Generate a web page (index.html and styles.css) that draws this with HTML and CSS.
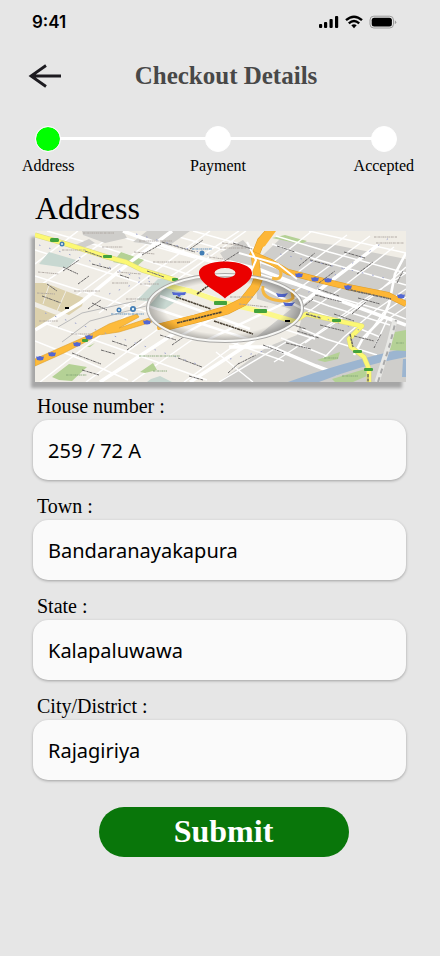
FILE: index.html
```html
<!DOCTYPE html>
<html lang="en">
<head>
<meta charset="utf-8">
<meta name="viewport" content="width=device-width, initial-scale=1">
<title>Checkout Details</title>
<link rel="stylesheet" href="styles.css">
</head>
<body>
<div class="status">
  <span>9:41</span>
  <svg width="80" height="16" viewBox="0 0 80 16" aria-hidden="true">
    <rect x="1" y="10" width="3.200" height="4" rx="1"/>
    <rect x="6" y="8" width="3.200" height="6" rx="1"/>
    <rect x="11.500" y="5" width="3.200" height="9" rx="1"/>
    <rect x="17" y="2" width="3.200" height="12" rx="1"/>
    <g fill="none" stroke="#000" stroke-width="2.400">
      <path d="M28 6.200Q36 -.8 44 6.200"/>
      <path d="M30.800 9.300Q36 4.800 41.200 9.300"/>
    </g>
    <path d="M33.300 11.300Q36 9.200 38.700 11.300L36 14.200Z"/>
    <rect x="52" y="2.200" width="23.500" height="11.800" rx="3.800" fill="none" stroke="#9b9b9b"/>
    <rect x="53.700" y="3.800" width="20.200" height="8.600" rx="2.500"/>
    <path d="M76.800 6.200Q78.300 7 78.300 8.200T76.800 10.200Z" fill="#9b9b9b"/>
  </svg>
</div>
<header class="header">
  <button class="back" type="button" aria-label="Back">
    <svg width="34" height="24" viewBox="0 0 34 24" fill="none" stroke="#1d1b20" stroke-width="2.800"><path d="M33 12H3M18 1.500L3 12L18 22.500"/></svg>
  </button>
  <h1>Checkout Details</h1>
</header>
<main>
  <ol class="steps">
    <li class="step current" aria-current="step">Address</li>
    <li class="step">Payment</li>
    <li class="step">Accepted</li>
  </ol>
  <form class="form">
    <h2>Address</h2>
    <svg class="map" viewBox="0 0 371 151" role="img" aria-label="Map of the delivery address">
      <defs>
        <radialGradient id="rim"><stop offset=".78" stop-color="#000" stop-opacity="0"/><stop offset="1" stop-color="#000" stop-opacity=".28"/></radialGradient>
        <clipPath id="glass"><ellipse cx="190" cy="77" rx="77" ry="33"/></clipPath>
        <path id="shield" d="M-4 -1.500Q-2 -1 0 -2Q2 -1 4 -1.500L3 2L0 2.500L-3 2Z"/>
      </defs>
      <rect width="371" height="151" fill="#f0ede6"/>
      <!-- built-up district -->
      <path d="M228 24L245 8L300 14L371 28V151H184L232 116L262 104L268 82L258 60L222 48Z" fill="#cfcecb"/>
      <!-- local streets -->
      <g fill="none" stroke="#fff" stroke-width="1.500">
        <path d="M0 19L80 44L130 60L220 89L280 108M0 45L50 61L109 80L178 105L249 130M0 89L62 110L122 131L172 149M0 110L45 128L93 149M12 0L61 14L132 36L180 53M90 7L160 27M123 0L190 19L247 39M158 0L219 17"/>
        <path d="M0 33L43 0M0 58L84 0M35 69L123 5M64 82L157 13L175 0M79 83L204 0M5 151L77 95L180 22L211 0M51 151L108 109L137 88M97 151L168 101M149 151L215 103L249 78"/>
      </g>
      <!-- blocks and parks -->
      <path d="M47 0H88L92 7L70 12L48 4ZM98 11L112 0H155L132 16ZM185 22L208 9L222 25L212 44L195 38ZM38 15L54 8L60 12L48 17Z" fill="#cfcecb"/>
      <path d="M0 52L10 52L49 67L47 75L34 84L0 71ZM0 76L24 85L0 100Z" fill="#dcd1ad"/>
      <path d="M14 54L8 73M31 60L22 80" stroke="#f0ede6"/>
      <g fill="#c8d8d1"><path d="M4 33L14 21L41 29L32 37ZM102 69L123 48L153 48L126 72ZM116 148L125 145L137 151H112Z"/></g>
      <g fill="#b4d195">
        <path d="M78 31L86 21L109 29L101 36ZM17 146L34 133L52 136L37 150L24 149ZM105 141L118 132L122 139L110 142ZM52 116L60 112L55 116ZM237 7L250 4L272 10L266 13Z"/>
      </g>
      <g fill="none" stroke="#fff" stroke-width="3.500">
        <path d="M0 99L45 72L98 29L137 0M65 151L146 98L166 83M88 0L143 20L204 39M155 151L215 112L279 63L343 14"/>
        <path d="M187 29L223 38L290 64L360 90L371 94M194 116L236 116L281 135L302 143"/>
      </g>
      <g fill="none" stroke="#fff" stroke-width="1.400">
        <path d="M241 5L294 21L371 42M237 13L280 28L371 54M224 43L280 60L353 81L371 88M231 52L294 75L355 94M266 76L301 88L345 106M267 98L291 108L342 124M246 107L277 119L294 126M274 0L371 22"/>
        <path d="M238 31L277 0M258 45L312 4M238 77L286 41L335 5M251 97L305 58L359 16M270 112L316 81L342 62L371 36M239 131L277 106L330 68L371 42M287 129L309 106L342 78L371 58M331 107L348 82L371 66M340 115L352 89L371 76M184 151L251 111M181 121L218 151"/>
      </g>
      <path d="M253 151Q305 132 371 117V126Q323 135 284 151ZM368 128H371V146H367Z" fill="#9cb5d0"/>
      <path d="M282 129L305 121L303 128L290 131ZM297 148L330 138L332 145L318 151H300ZM354 119L360 101L371 99V120Z" fill="#b4d195"/>
      <path d="M319 124L328 107L348 87L354 73L360 43L371 22" fill="none" stroke="#fff" stroke-width="2.600"/>
      <path d="M342 151L348 132L354 113L360 89" fill="none" stroke="#e8e8e5" stroke-width="5"/>
      <path d="M343 151L349 132L355 113L361 89" fill="none" stroke="#aaa" stroke-width="2" stroke-dasharray="5 4"/>
      <path d="M23 96L47 82L101 70M27 111L55 90L111 75" fill="none" stroke="#bbb"/>
      <!-- main roads -->
      <g fill="none" stroke-linejoin="round">
        <path d="M0 4L28 12L72 26L91 31L107 39L140 49L155 56L185 67L215 79L263 88L271 83L327 95L314 108L316 116L329 126L334 138L334 151" stroke="#d9d787" stroke-width="5"/>
        <path d="M0 4L28 12L72 26L91 31L107 39L140 49L155 56L185 67L215 79L263 88L271 83L327 95L314 108L316 116L329 126L334 138L334 151" stroke="#fcf873" stroke-width="4"/>
        <path d="M0 128L29 115L52 105L74 93L102 83L104 86L84 97L114 87L117 91L84 101L64 104L29 122L0 135Z" fill="#fdbb3b" stroke="#de9d28" stroke-width=".6"/>
        <path d="M122 95L160 87L190 79L204 72L217 59L222 44L220 25L226 10L234 1" stroke="#de9d28" stroke-width="8"/>
        <path d="M122 95L160 87L190 79L204 72L217 59L222 44L220 25L226 10L234 1" stroke="#fdb636" stroke-width="7"/>
        <path d="M221 20L225 10L231 0H241L230 15Z" fill="#fdb636"/>
        <path d="M215 22L236 31L253 41L280 48L313 56L353 64L371 73" stroke="#de9d28" stroke-width="6"/>
        <path d="M215 22L236 31L253 41L280 48L313 56L353 64L371 73" stroke="#fdb636" stroke-width="5"/>
        <path d="M230 28Q246 34 246 42T237 47M222 63Q234 61 240 69T258 67V58" stroke="#f5b842" stroke-width="3"/>
        <path d="M212 11L221 29L212 50M204 22L243 33L262 48" stroke="#fff" stroke-width="2"/>
      </g>
      <!-- street names, too small to read -->
      <g fill="none" stroke="#686666" stroke-width="1" stroke-dasharray="3 .6 1 .4 2 .5">
        <path d="M50 20L67 26M112 40L129 46M28 36L43 43M57 33L76 38M85 44L94 47M7 65L26 72M57 72L72 79M53 78L66 69M12 53L22 60M43 53L54 45M28 40L44 29M107 24L126 13M77 110L92 115M66 119L80 123M37 122L66 133M137 114L150 105M143 127L167 136M125 104L141 109M92 119L107 108M47 139L64 144M154 145L168 149M155 18L168 9M127 11L160 21"/>
        <path d="M198 12L217 18M185 33L204 21M242 15L260 21M275 29L297 35M309 21L330 27M264 35L280 22M284 52L300 40M322 43L338 31M280 64L307 71M283 58L304 65M264 79L278 68M299 83L319 90M285 94L309 100M249 91L271 98M262 100L284 107M317 83L331 71M323 67L345 73M251 112L276 118M228 114L249 122M203 133L221 124M193 142L204 132M319 105L339 110M362 52L368 40M339 117L346 103"/>
        <path d="M311 58L356 68M271 83L286 87M315 103L318 116M333 143V151" stroke-width="1.500"/>
      </g>
      <g fill="none" stroke="#aaa39d" stroke-width=".9" stroke-dasharray="2 .5 1 .7">
        <path d="M27 19H51M67 16H88M82 41L106 43M48 2H79M104 10H137M3 41L24 43M39 60H65M4 90H23M2 62L20 63M91 68H119M105 53H124M36 103H58M118 31H155M99 21L120 23M152 58L174 60M185 17H211M187 12L208 15M339 6H362M341 12H369M77 52H93M174 26L195 29"/>
      </g>
      <g fill="none" stroke="#9ba1ce" stroke-width="1" stroke-dasharray="1.500 9"><path d="M4 14L68 34L121 53M74 63L124 43M10 82L100 112L165 134M245 23L350 47M238 84L300 44L354 7M253 75L330 101M195 128L233 119M101 3L182 26"/></g>
      <g fill="none" stroke="#82a574" stroke-width=".9" stroke-dasharray="2 .5 1 .7"><path d="M104 125H145M31 144H52M118 140H132M289 127H303M307 145H323M361 112H369"/></g>
      <g fill="none" stroke="#6393bd" stroke-width="1" stroke-dasharray="2 .5 1 .7"><path d="M157 18H177M76 83H109"/></g>
      <g fill="#437db4"><circle cx="27" cy="13" r="2.500"/><circle cx="84" cy="79" r="2.500"/><circle cx="98" cy="78" r="3"/><circle cx="167" cy="22" r="2.500"/></g>
      <g fill="#e7f2f4"><circle cx="27" cy="13" r="1"/><circle cx="84" cy="79" r="1"/><circle cx="98" cy="78" r="1.200"/></g>
      <g fill="#5267d3">
        <use href="#shield" x="5" y="127"/><use href="#shield" x="17" y="123"/><use href="#shield" x="42" y="113"/><use href="#shield" x="54" y="106"/><use href="#shield" x="112" y="91"/><use href="#shield" x="264" y="44"/><use href="#shield" x="280" y="48"/><use href="#shield" x="293" y="49"/><use href="#shield" x="313" y="56"/><use href="#shield" x="366" y="65"/>
      </g>
      <g fill="#43a33c"><rect x="15" y="7" width="9" height="4" rx="1.500"/><rect x="68" y="24" width="9" height="3" rx="1"/><rect x="137" y="47" width="6" height="3" rx="1"/><rect x="297" y="88" width="9" height="3" rx="1"/><rect x="318" y="119" width="9" height="3" rx="1"/><rect x="329" y="137" width="9" height="3" rx="1"/><rect x="47" y="108" width="6" height="3" rx="1"/></g>
      <rect x="30" y="76" width="4" height="2"/>
      <!-- lens -->
      <g clip-path="url(#glass)">
        <ellipse cx="190" cy="77" rx="77" ry="33" fill="#f0ede6"/>
        <path d="M221 50L240 40L275 70L262 92L244 106L214 112L256 78L222 68Z" fill="#cfcecb"/>
        <path d="M113 76L132 54L158 58L130 78Z" fill="#c8d8d1"/>
        <path d="M110 74L152 88L240 117M125 65L215 98M145 105L202 74M168 111L262 66M226 56L268 78M140 54L180 67" fill="none" stroke="#fff" stroke-width="2.400"/>
        <path d="M125 53L155 60L190 72L220 79L268 93" fill="none" stroke="#fcf88a" stroke-width="5"/>
        <path d="M228 55Q226 66 240 69T258 67L256 55" fill="none" stroke="#f5b842" stroke-width="3"/>
        <path d="M116 99L160 88L192 79L208 71L220 56L224 46" fill="none" stroke="#de9d28" stroke-width="9"/>
        <path d="M116 99L160 88L192 79L208 71L220 56L224 46" fill="none" stroke="#fdb636" stroke-width="8"/>
        <path d="M142 92L187 81M141 66L176 78M179 90L218 103M162 63L180 50" fill="none" stroke="#4b4336" stroke-width="1.600" stroke-dasharray="3 .5 2 .6"/>
        <path d="M195 66H218M204 73L233 76" fill="none" stroke="#aaa39d" stroke-dasharray="2 .5 1 .7"/>
        <path d="M137 61Q144 62 151 61L150 64H146L144 66L142 64H138ZM241 62Q247 64 253 62L250 66H243ZM248 71Q254 73 260 71L257 75H250Z" fill="#5267d3"/>
        <rect x="179" y="70" width="13" height="4" rx="1" fill="#43a33c"/><rect x="219" y="78" width="13" height="4" rx="1" fill="#43a33c"/>
        <rect x="250" y="89" width="5" height="2"/>
      </g>
      <ellipse cx="190" cy="77" rx="77" ry="33" fill="url(#rim)"/>
      <ellipse cx="190" cy="77" rx="78" ry="34" fill="none" stroke="#a9a8a6" stroke-width="2"/>
      <ellipse cx="190" cy="77" rx="77" ry="33" fill="none" stroke="#f7f7f5" stroke-width="2"/>
      <!-- pin -->
      <path fill="#eb0000" fill-rule="evenodd" d="M190 67.500C184 61 164 53 164 42C164 35 176 30.500 190 30.500S217 35 217 42C217 53 196 61 190 67.500ZM179.500 42A10.500 5 0 1 0 200.500 42A10.500 5 0 1 0 179.500 42Z"/>
    </svg>
    <div class="field"><label for="house">House number :</label><input id="house" type="text" value="259 / 72 A"></div>
    <div class="field"><label for="town">Town :</label><input id="town" type="text" value="Bandaranayakapura"></div>
    <div class="field"><label for="state">State :</label><input id="state" type="text" value="Kalapaluwawa"></div>
    <div class="field"><label for="city">City/District :</label><input id="city" type="text" value="Rajagiriya"></div>
    <div class="actions"><button class="submit" type="submit">Submit</button></div>
  </form>
</main>
</body>
</html>
```
FILE: styles.css
```css
*, *::before { box-sizing: border-box; }

body {
  margin: 0;
  min-height: 100vh;
  background: #e6e6e6;
  color: #000;
  font-family: "Liberation Serif", serif;
}

h1, h2 { margin: 0; }

.status {
  display: flex;
  align-items: center;
  justify-content: space-between;
  height: 44px;
  padding: 0 42px 0 32px;
  font: 600 17px "Inter", sans-serif;
}

.header {
  display: grid;
  grid-template-columns: 34px 1fr 50px;
  align-items: center;
  height: 64px;
  padding-left: 28px;
}

.header h1 {
  color: #484848;
  font-size: 25px;
  line-height: 32px;
  text-align: center;
}

.back {
  display: flex;
  padding: 0;
  border: 0;
  background: none;
}

.steps {
  position: relative;
  display: grid;
  grid-template-columns: 1fr auto 1fr;
  margin: 18px 0 0;
  padding: 0 26px 0 22px;
  list-style: none;
}

.steps::before {
  content: "";
  position: absolute;
  top: 11px;
  left: 48px;
  right: 56px;
  height: 3px;
  background: #fff;
}

.step {
  position: relative;
  display: flex;
  flex-direction: column;
  align-items: center;
  gap: 4px;
  font-size: 16px;
  line-height: 20px;
}

.step:first-child { justify-self: start; }
.step:last-child { justify-self: end; }

.step::before {
  content: "";
  width: 26px;
  height: 26px;
  border: 1px solid #fff;
  border-radius: 50%;
  background: #fff;
}

.step.current::before { background: #0f0; background-clip: padding-box; }

.form { padding: 12px 34px 24px 33px; }

.form h2 {
  padding-left: 2px;
  font-size: 32px;
  font-weight: 400;
  line-height: 40px;
}

.map {
  display: block;
  width: calc(100% - 2px);
  height: auto;
  margin: 3px 0 12px 2px;
  box-shadow: -4px 6px 3px rgba(0, 0, 0, .28);
}

.field {
  display: flex;
  flex-direction: column;
  gap: 2px;
  margin-bottom: 14px;
}

.field label {
  padding-left: 4px;
  font-size: 20px;
  line-height: 24px;
}

.field input {
  width: 100%;
  height: 60px;
  padding: 0 15px;
  border: 0;
  border-radius: 15px;
  background: #fafafa;
  box-shadow: 0 1px 3px rgba(0, 0, 0, .3);
  color: #000;
  font: 20px "Noto Sans", sans-serif;
}

.actions {
  display: flex;
  justify-content: center;
  padding: 13px 0 0 8px;
}

.submit {
  width: 250px;
  height: 50px;
  padding: 0 0 2px;
  border: 0;
  border-radius: 25px;
  background: #09760a;
  color: #fff;
  font: bold 32px "Liberation Serif", serif;
}
```
